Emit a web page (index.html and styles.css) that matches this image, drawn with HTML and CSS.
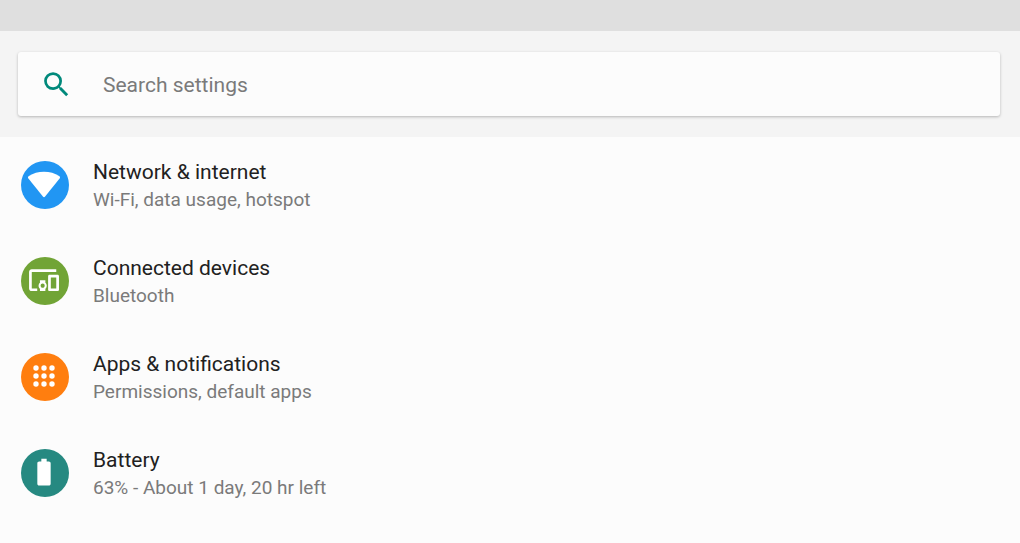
FILE: index.html
```html
<!DOCTYPE html>
<html lang="en">
<head>
<meta charset="utf-8">
<meta name="viewport" content="width=device-width, initial-scale=1">
<title>Settings</title>
<link rel="stylesheet" href="styles.css">
</head>
<body>
<div class="status-bar"></div>
<header class="header">
  <form class="search" role="search">
    <svg class="search-icon" viewBox="0 0 24 24" aria-hidden="true"><path d="M15.5 14h-.79l-.28-.27A6.47 6.47 0 0 0 16 9.5 6.5 6.5 0 1 0 9.500 16c1.610 0 3.090-.59 4.230-1.570l.27.28v.79l5 4.990L20.490 19l-4.990-5zm-6 0C7.010 14 5 11.990 5 9.500S7.010 5 9.500 5 14 7.010 14 9.500 11.990 14 9.500 14z"/></svg>
    <input class="search-input" type="search" placeholder="Search settings" aria-label="Search settings">
  </form>
</header>
<main>
  <ul class="list">
    <li><a class="item" href="#network">
      <svg class="icon" viewBox="0 0 48 48" aria-hidden="true"><circle class="blue" cx="24" cy="24" r="24"/><path d="M23 10.700c5.700 0 10.900 1.500 15.100 4.200 1 .7 1.200 1.700.5 2.700L24.100 35.600c-.7.800-1.500.8-2.200 0L7.400 17.600c-.7-1-.5-2 .5-2.700C12.100 12.200 17.300 10.700 23 10.700z"/></svg>
      <span class="text"><span class="title">Network &amp; internet</span><span class="summary">Wi-Fi, data usage, hotspot</span></span>
    </a></li>
    <li><a class="item" href="#devices">
      <svg class="icon" viewBox="0 0 48 48" aria-hidden="true"><circle class="green" cx="24" cy="24" r="24"/><path transform="translate(6.700 6.900) scale(1.360)" d="M3 6h18V4H3c-1.100 0-2 .9-2 2v12c0 1.100.9 2 2 2h4v-2H3V6zm10 6H9v1.780c-.61.55-1 1.330-1 2.220s.39 1.670 1 2.220V20h4v-1.780c.61-.55 1-1.340 1-2.220s-.39-1.670-1-2.220V12zm-2 5.500c-.83 0-1.500-.67-1.500-1.500s.67-1.500 1.500-1.500 1.500.67 1.500 1.500-.67 1.500-1.500 1.500zM22 8h-6c-.5 0-1 .5-1 1v10c0 .5.5 1 1 1h6c.5 0 1-.5 1-1V9c0-.5-.5-1-1-1zm-1 10h-4v-8h4v8z"/></svg>
      <span class="text"><span class="title">Connected devices</span><span class="summary">Bluetooth</span></span>
    </a></li>
    <li><a class="item" href="#apps">
      <svg class="icon" viewBox="0 0 48 48" aria-hidden="true"><circle class="orange" cx="24" cy="24" r="24"/><circle cx="15" cy="15" r="2.700"/><circle cx="23" cy="15" r="2.700"/><circle cx="31" cy="15" r="2.700"/><circle cx="15" cy="23" r="2.700"/><circle cx="23" cy="23" r="2.700"/><circle cx="31" cy="23" r="2.700"/><circle cx="15" cy="31" r="2.700"/><circle cx="23" cy="31" r="2.700"/><circle cx="31" cy="31" r="2.700"/></svg>
      <span class="text"><span class="title">Apps &amp; notifications</span><span class="summary">Permissions, default apps</span></span>
    </a></li>
    <li><a class="item" href="#battery">
      <svg class="icon" viewBox="0 0 48 48" aria-hidden="true"><circle class="teal" cx="24" cy="24" r="24"/><path transform="translate(7 7.200) scale(1.333)" d="M15.670 4H14V2h-4v2H8.330C7.600 4 7 4.600 7 5.330v15.330C7 21.400 7.600 22 8.330 22h7.330c.74 0 1.340-.6 1.340-1.330V5.330C17 4.600 16.400 4 15.670 4z"/></svg>
      <span class="text"><span class="title">Battery</span><span class="summary">63% - About 1 day, 20 hr left</span></span>
    </a></li>
  </ul>
</main>
</body>
</html>
```
FILE: styles.css
```css
* {
  box-sizing: border-box;
}

body {
  margin: 0;
  background: #fcfcfc;
  color: #212121;
  font-family: Roboto, "Liberation Sans", sans-serif;
}

.status-bar {
  height: 31px;
  background: #dfdfdf;
}

.header {
  padding: 21px 20px 21px 18px;
  background: #f4f4f4;
}

.search {
  display: flex;
  align-items: center;
  gap: 30px;
  height: 64px;
  padding: 0 22px;
  border-radius: 3px;
  background: #fcfcfc;
  box-shadow: 0 1px 3px rgba(0, 0, 0, 0.26);
}

.search-icon {
  flex: none;
  width: 33px;
  height: 33px;
  fill: #00897b;
}

.search-input {
  flex: 1;
  min-width: 0;
  height: 48px;
  padding: 2px 0 0;
  border: 0;
  outline: 0;
  background: transparent;
  color: #212121;
  font: inherit;
  font-size: 21px;
}

.search-input::placeholder {
  color: #7a7a7a;
  opacity: 1;
}

.list {
  margin: 0;
  padding: 0;
  list-style: none;
}

.item {
  display: flex;
  align-items: center;
  gap: 24px;
  height: 96px;
  padding: 0 21px;
  color: inherit;
  text-decoration: none;
}

.icon {
  flex: none;
  width: 48px;
  height: 48px;
  fill: #fff;
}

.blue {
  fill: #2196f3;
}

.green {
  fill: #71a436;
}

.orange {
  fill: #ff7e0f;
}

.teal {
  fill: #268981;
}

.text {
  display: flex;
  flex-direction: column;
  min-width: 0;
  padding-top: 1px;
}

.title {
  font-size: 21px;
  line-height: 28px;
}

.summary {
  color: #7a7a7a;
  font-size: 19px;
  line-height: 27px;
}
```
